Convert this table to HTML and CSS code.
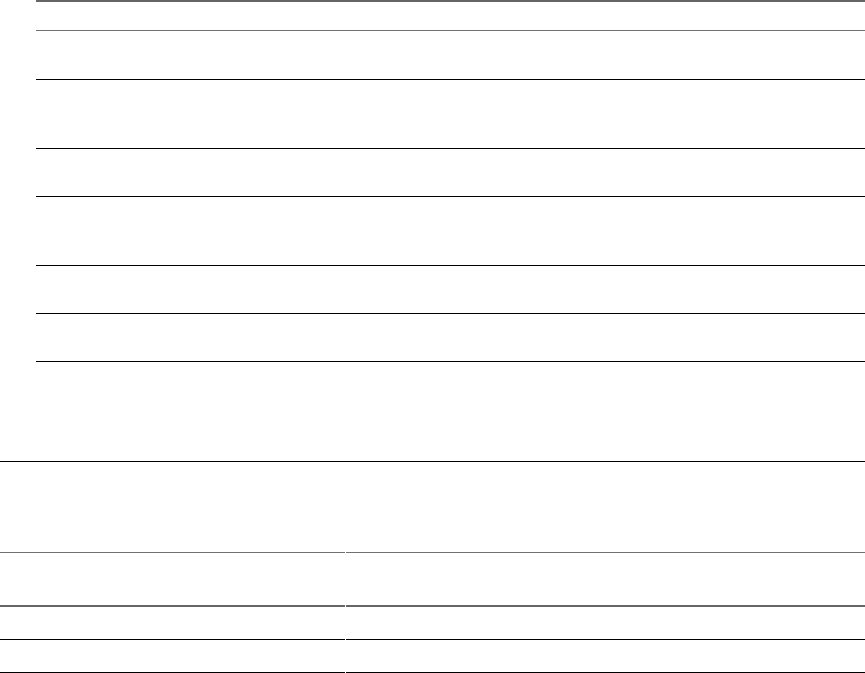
FILE: index.html
```html
<!DOCTYPE html>
<html>
<head>
<meta charset="utf-8">
<link rel="stylesheet" href="styles.css">
</head>
<body>
<div class="page">
  <div class="list">
    <div class="row head"></div>
    <div class="row sub"></div>
    <div class="row r69"></div>
    <div class="row r48"></div>
    <div class="row r69"></div>
    <div class="row r48"></div>
    <div class="row r48"></div>
    <div class="row r100"></div>
  </div>
  <div class="block b91"></div>
  <div class="table">
    <div class="cell grey c53"></div><div class="cell grey c53"></div>
    <div class="cell thick c34"></div><div class="cell thick c34"></div>
    <div class="cell black c33"></div><div class="cell black c33"></div>
    <div class="cell black last"></div><div class="cell black last"></div>
  </div>
</div>
</body>
</html>
```
FILE: styles.css
```css
html, body {
  margin: 0;
  padding: 0;
  background: #fff;
  font-family: "Liberation Sans", Arial, sans-serif;
}
.page {
  width: 865px;
  height: 673px;
  overflow: hidden;
}
.list {
  padding-left: 36px;
}
.row {
  border-top: 1px solid #000;
  box-sizing: border-box;
}
.row.head {
  border-top: 2px solid #666;
  height: 30px;
}
.row.sub {
  border-top: 1px solid #707070;
  height: 49px;
}
.r69 { height: 69px; }
.r48 { height: 48px; }
.r100 { height: 100px; }
.block {
  border-top: 1px solid #000;
  box-sizing: border-box;
}
.b91 { height: 91px; }
.table {
  display: grid;
  grid-template-columns: 345px 1fr;
  column-gap: 1px;
}
.cell {
  box-sizing: border-box;
}
.cell.grey { border-top: 1px solid #707070; }
.cell.thick { border-top: 2px solid #666; }
.cell.black { border-top: 1px solid #000; }
.c53 { height: 53px; }
.c34 { height: 34px; }
.c33 { height: 33px; }
.last { height: 1px; }
```
